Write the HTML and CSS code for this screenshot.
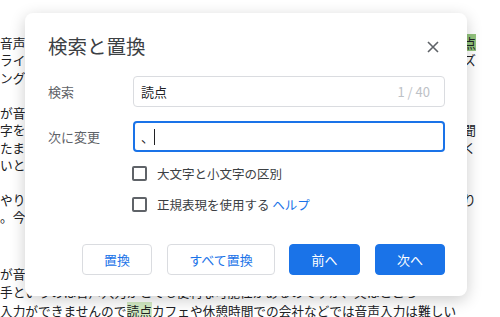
FILE: index.html
```html
<!DOCTYPE html>
<html lang="ja">
<head>
<meta charset="utf-8">
<link rel="stylesheet" href="styles.css">
</head>
<body>
<div class="doc">
  <div class="line"><span>音声入力を使って文章を書いていると、いろいろな</span><span class="hl-cur">点</span></div>
  <div class="line"><span>ライティングのスピードが上がるのを実感できる</span><span>ズ</span></div>
  <div class="line"><span>ングができるのはとても便利です。</span><span></span></div>
  <div class="line blank"></div>
  <div class="line"><span>が音声入力の弱点としては、</span><span></span></div>
  <div class="line"><span>字を入力するのが難しいことで</span><span>聞</span></div>
  <div class="line"><span>たまに誤変換されてしまうことも多</span><span>く</span></div>
  <div class="line"><span>いと思います。</span><span></span></div>
  <div class="line blank"></div>
  <div class="line"><span>やり方としてはあとでまとめて直す</span><span>り</span></div>
  <div class="line"><span>。今回は検索と置換を使います。</span><span></span></div>
  <div class="tail">
    <div class="line"><span>が音声入力のメリットです。</span><span></span></div>
    <div class="line"><span>手というのは音声入力がとても便利な可能性があるのですが、実はところ</span></div>
    <div class="line"><span>入力ができませんので<span class="hl">読点</span>カフェや休憩時間での会社などでは音声入力は難しい</span></div>
  </div>
</div>

<div class="dialog">
  <div class="header">
    <div class="title">検索と置換</div>
    <svg class="close" width="24" height="24" viewBox="0 0 24 24"><path d="M7 7 L17 17 M17 7 L7 17" stroke="#5f6368" stroke-width="1.6" fill="none"/></svg>
  </div>
  <div class="field">
    <div class="label">検索</div>
    <div class="input"><span class="value">読点</span><span class="count">1 / 40</span></div>
  </div>
  <div class="field">
    <div class="label">次に変更</div>
    <div class="input focus"><span class="value">、</span><span class="caret"></span></div>
  </div>
  <div class="check"><span class="box"></span><span>大文字と小文字の区別</span></div>
  <div class="check"><span class="box"></span><span>正規表現を使用する <span class="link">ヘルプ</span></span></div>
  <div class="buttons">
    <div class="btn w1">置換</div>
    <div class="btn w2">すべて置換</div>
    <div class="btn primary w3">前へ</div>
    <div class="btn primary w4">次へ</div>
  </div>
</div>
</body>
</html>
```

FILE: styles.css
```css
html, body {
  margin: 0;
  padding: 0;
}
body {
  width: 500px;
  height: 317px;
  overflow: hidden;
  position: relative;
  background: #fff;
  font-family: "Noto Sans CJK JP", "Noto Sans", sans-serif;
}
.doc {
  width: 476px;
  padding-top: 34px;
  font-size: 12.7px;
  color: #202124;
}
.line {
  height: 17.45px;
  line-height: 17.45px;
  display: flex;
  justify-content: space-between;
  white-space: nowrap;
  overflow: hidden;
}
.tail {
  margin-top: 39px;
}
.tail .line {
  height: 18.5px;
  line-height: 18.5px;
}
.hl {
  background: #d4ebc4;
}
.hl-cur {
  background: #93c47d;
}
.dialog {
  position: absolute;
  left: 25px;
  top: 13px;
  width: 398px;
  height: 242px;
  padding: 21px 22px 20px 22px;
  background: #fff;
  border-radius: 8px;
  box-shadow: 0 4px 16px rgba(0,0,0,0.2);
  display: flex;
  flex-direction: column;
}
.header {
  display: flex;
  justify-content: space-between;
  align-items: center;
  height: 24px;
  margin-bottom: 18px;
}
.title {
  font-size: 19.5px;
  line-height: 24px;
  color: #3c4043;
  padding-left: 1px;
}
.close {
  margin-top: 1px;
}
.field {
  display: flex;
  align-items: center;
  margin-bottom: 14px;
}
.label {
  width: 85px;
  font-size: 13px;
  color: #5f6368;
  padding-left: 1px;
}
.input {
  box-sizing: border-box;
  width: 312px;
  height: 31px;
  border: 1px solid #dadce0;
  border-radius: 4px;
  display: flex;
  align-items: center;
  padding: 0 14px 0 7px;
  font-size: 13px;
  color: #202124;
}
.input .value {
  flex: none;
}
.input .count {
  margin-left: auto;
  color: #bdc1c6;
}
.input.focus {
  border: 2px solid #1a73e8;
  padding-left: 6px;
}
.caret {
  width: 1px;
  height: 16px;
  background: #202124;
}
.check {
  display: flex;
  align-items: center;
  margin-left: 85px;
  height: 15px;
  margin-bottom: 16px;
  font-size: 12.5px;
  color: #3c4043;
}
.check .box {
  box-sizing: border-box;
  width: 15px;
  height: 15px;
  border: 2px solid #5f6368;
  border-radius: 2px;
  margin-right: 10px;
}
.link {
  color: #1a73e8;
}
.buttons {
  display: flex;
  justify-content: flex-end;
  gap: 14px;
  margin-top: 16px;
}
.btn {
  box-sizing: border-box;
  height: 31px;
  border: 1px solid #dadce0;
  border-radius: 4px;
  display: flex;
  align-items: center;
  justify-content: center;
  font-size: 13px;
  color: #1a73e8;
  background: #fff;
}
.btn.primary {
  background: #1a73e8;
  border-color: #1a73e8;
  color: #fff;
}
.w1 { width: 70px; margin-right: 1px; }
.w2 { width: 108px; }
.w3 { width: 71px; margin-right: 1px; }
.w4 { width: 70px; }
```
